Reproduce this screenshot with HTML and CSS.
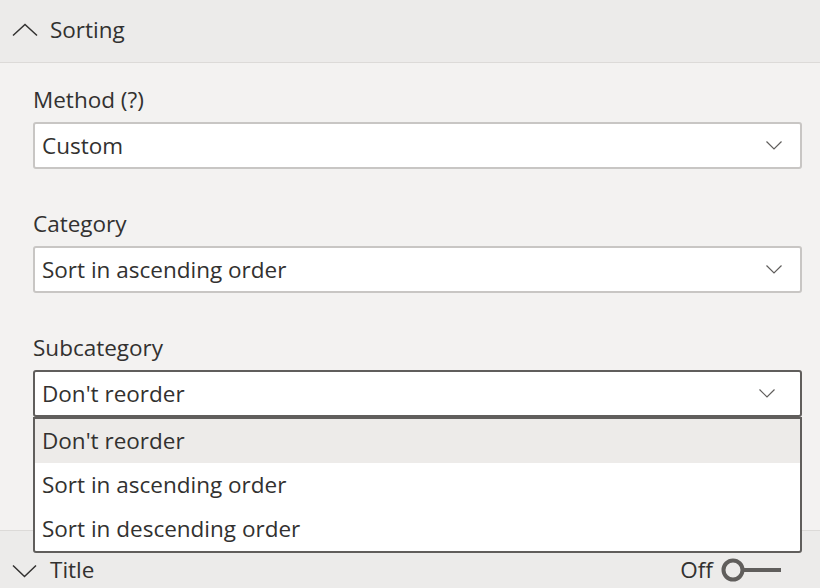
FILE: index.html
```html
<!DOCTYPE html>
<html lang="en">
<head>
<meta charset="utf-8">
<title>Sorting</title>
<link rel="stylesheet" href="styles.css">
</head>
<body>
<div class="panel">
  <div class="section-header">
    <svg class="chev" width="26" height="14" viewBox="0 0 26 14"><polyline points="1,12.5 13,1.5 25,12.5" /></svg>
    <span class="section-title">Sorting</span>
  </div>
  <div class="section-body">
    <div class="field">
      <div class="label">Method (?)</div>
      <div class="select">
        <span>Custom</span>
        <svg class="caret" width="16" height="9" viewBox="0 0 16 9"><polyline points="0.5,0.5 8,8 15.5,0.5" /></svg>
      </div>
    </div>
    <div class="field">
      <div class="label">Category</div>
      <div class="select">
        <span>Sort in ascending order</span>
        <svg class="caret" width="16" height="9" viewBox="0 0 16 9"><polyline points="0.5,0.5 8,8 15.5,0.5" /></svg>
      </div>
    </div>
    <div class="field">
      <div class="label">Subcategory</div>
      <div class="select open">
        <span>Don't reorder</span>
        <svg class="caret" width="16" height="9" viewBox="0 0 16 9"><polyline points="0.5,0.5 8,8 15.5,0.5" /></svg>
        <ul class="menu">
          <li class="item selected">Don't reorder</li>
          <li class="item">Sort in ascending order</li>
          <li class="item">Sort in descending order</li>
        </ul>
      </div>
    </div>
  </div>
  <div class="section-header collapsed">
    <svg class="chev" width="26" height="14" viewBox="0 0 26 14"><polyline points="1,1.5 12.5,12.5 24,1.5" /></svg>
    <span class="section-title">Title</span>
    <div class="toggle">
      <span>Off</span>
      <svg width="60" height="26" viewBox="0 0 60 26"><circle cx="12" cy="13" r="9.5" /><line x1="21.5" y1="13" x2="60" y2="13" /></svg>
    </div>
  </div>
</div>
</body>
</html>
```
FILE: styles.css
```css
* { box-sizing: border-box; }
html, body {
  margin: 0;
  padding: 0;
  width: 820px;
  height: 588px;
  overflow: hidden;
  background: #f3f2f1;
  font-family: "Open Sans", "Noto Sans", sans-serif;
  font-size: 22.5px;
  color: #323130;
}
.panel {
  display: flex;
  flex-direction: column;
  width: 820px;
  height: 588px;
}
.section-header {
  display: flex;
  align-items: center;
  gap: 12px;
  height: 63px;
  padding-left: 12px;
  padding-right: 39px;
  padding-bottom: 2px;
  background: #ecebea;
  border-bottom: 1px solid #dcdad8;
  flex-shrink: 0;
}
.section-header.collapsed {
  border-bottom: none;
  border-top: 1px solid #dcdad8;
  align-items: flex-start;
  padding-top: 24px;
  padding-bottom: 0;
  height: 70px;
}
.section-header.collapsed .chev { margin-top: 9px; }
.chev polyline {
  fill: none;
  stroke: #323130;
  stroke-width: 1.5;
}
.section-title {
  line-height: 30px;
  flex: 1;
}
.section-body {
  height: 467px;
  padding: 22px 18px 0 33px;
  flex-shrink: 0;
}
.field { margin-bottom: 40px; }
.label {
  line-height: 30px;
  margin-bottom: 7px;
}
.select {
  position: relative;
  display: flex;
  align-items: center;
  justify-content: space-between;
  height: 47px;
  padding: 0 18px 0 7px;
  background: #ffffff;
  border: 2px solid #c8c6c4;
  border-radius: 3px;
}
.caret polyline {
  fill: none;
  stroke: #605e5c;
  stroke-width: 1.2;
}
.select.open {
  border-color: #605e5c;
  padding-right: 25px;
}
.menu {
  position: absolute;
  top: calc(100% + 2px);
  left: -2px;
  right: -2px;
  margin: 0;
  padding: 0;
  list-style: none;
  background: #ffffff;
  border: 2px solid #605e5c;
  border-radius: 0 0 3px 3px;
  z-index: 5;
}
.item {
  height: 44px;
  line-height: 44px;
  padding-left: 7px;
}
.item.selected { background: #edebe9; }
.toggle {
  display: flex;
  align-items: center;
  gap: 8px;
  line-height: 30px;
}
.toggle svg circle {
  fill: none;
  stroke: #605e5c;
  stroke-width: 4;
}
.toggle svg line {
  stroke: #605e5c;
  stroke-width: 4;
}
```
